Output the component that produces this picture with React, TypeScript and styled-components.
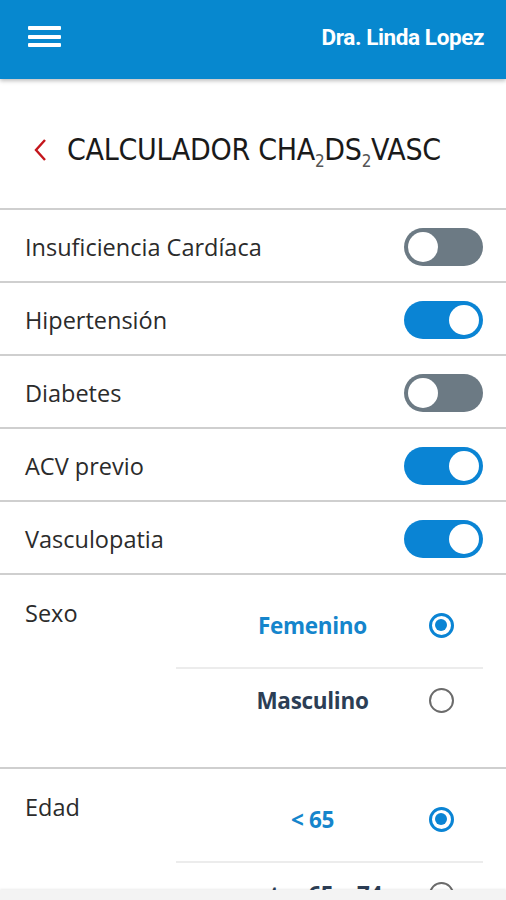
import React from "react";
import styled, { createGlobalStyle } from "styled-components";

const GlobalStyle = createGlobalStyle`
  html, body { margin: 0; padding: 0; background: #ffffff; }
  body { font-family: "Open Sans", "DejaVu Sans", sans-serif; overflow: hidden; }
  * { box-sizing: border-box; }
`;

const Page = styled.div`
  width: 506px;
  min-height: 900px;
  background: #fff;
`;

const Header = styled.header`
  height: 79px;
  background: #0788cf;
  display: flex;
  align-items: center;
  justify-content: space-between;
  padding: 0 22px 6px 28px;
  box-shadow: 0 2px 4px rgba(0, 0, 0, 0.25);
  position: relative;
  z-index: 2;
`;

const MenuButton = styled.div`
  width: 33px;
  display: flex;
  flex-direction: column;
  gap: 4.5px;
  & > span {
    display: block;
    height: 4px;
    background: #fff;
    border-radius: 1px;
  }
`;

const UserName = styled.div`
  color: #fff;
  font-family: Roboto, "Liberation Sans", sans-serif;
  font-weight: 700;
  font-size: 22.5px;
  letter-spacing: -0.4px;
`;

const TitleBar = styled.div`
  height: 131px;
  display: flex;
  align-items: center;
  padding: 12px 0 0 33px;
  border-bottom: 2px solid #cfcfcf;
`;

const BackIcon = styled.svg`
  width: 14px;
  height: 24px;
  margin-right: 20px;
`;

const Title = styled.h1`
  margin: 0;
  font-family: "DejaVu Sans Condensed", "DejaVu Sans", sans-serif;
  font-stretch: condensed;
  font-weight: 400;
  font-size: 30px;
  color: #1a1a1a;
  letter-spacing: -0.3px;
  sub {
    font-size: 17px;
    vertical-align: -7px;
    line-height: 0;
    color: #555;
  }
`;

const ToggleRow = styled.div`
  height: 73px;
  display: flex;
  align-items: center;
  justify-content: space-between;
  padding: 2px 23px 0 25px;
  border-bottom: 2px solid #cfcfcf;
`;

const Label = styled.span`
  font-family: "Open Sans", "DejaVu Sans", sans-serif;
  font-size: 23.5px;
  color: #2b2b2b;
  letter-spacing: 0;
`;

const Switch = styled.div<{ $on: boolean }>`
  width: 79px;
  height: 38px;
  border-radius: 19px;
  background: ${(p) => (p.$on ? "#0a84d4" : "#6c7a84")};
  display: flex;
  align-items: center;
  justify-content: ${(p) => (p.$on ? "flex-end" : "flex-start")};
  padding: 0 4px;
  &::after {
    content: "";
    width: 30px;
    height: 30px;
    border-radius: 50%;
    background: #fff;
  }
`;

const ChoiceSection = styled.div`
  display: grid;
  grid-template-columns: 176px 1fr;
  padding: 0 23px 36px 0;
  border-bottom: 2px solid #cfcfcf;
`;

const ChoiceLabel = styled.div`
  padding: 23px 0 0 25px;
  line-height: 30px;
`;

const Options = styled.div`
  padding-top: 18px;
  display: flex;
  flex-direction: column;
`;

const Option = styled.div`
  height: 64px;
  display: grid;
  grid-template-columns: 1fr 48px;
  align-items: center;
  padding-right: 18px;
  & + & {
    border-top: 2px solid #ececec;
    margin-top: 10px;
  }
`;

const OptionText = styled.span<{ $active: boolean }>`
  font-family: "Open Sans", "DejaVu Sans", sans-serif;
  font-weight: 700;
  font-size: 22.5px;
  letter-spacing: -0.3px;
  text-align: center;
  padding-left: 32px;
  color: ${(p) => (p.$active ? "#1585cc" : "#2c3e55")};
`;

const Radio = styled.span<{ $checked: boolean }>`
  justify-self: center;
  width: 25px;
  height: 25px;
  border-radius: 50%;
  border: ${(p) => (p.$checked ? "3px solid #0a84d4" : "2px solid #6b6b6b")};
  display: flex;
  align-items: center;
  justify-content: center;
  &::after {
    content: "";
    width: 12px;
    height: 12px;
    border-radius: 50%;
    background: ${(p) => (p.$checked ? "#0a84d4" : "transparent")};
  }
`;

const BottomBar = styled.div`
  position: fixed;
  left: 0;
  right: 0;
  bottom: 0;
  height: 10px;
  background: #f3f3f3;
  box-shadow: 0 -1px 2px rgba(0, 0, 0, 0.08);
`;

const toggles = [
  { label: "Insuficiencia Cardíaca", on: false },
  { label: "Hipertensión", on: true },
  { label: "Diabetes", on: false },
  { label: "ACV previo", on: true },
  { label: "Vasculopatia", on: true },
];

const choices = [
  {
    label: "Sexo",
    options: [
      { text: "Femenino", checked: true },
      { text: "Masculino", checked: false },
    ],
  },
  {
    label: "Edad",
    options: [
      { text: "< 65", checked: true },
      { text: "entre 65 y 74", checked: false },
      { text: "≥ 75", checked: false },
    ],
  },
];

export default function App() {
  return (
    <Page>
      <GlobalStyle />
      <Header>
        <MenuButton>
          <span />
          <span />
          <span />
        </MenuButton>
        <UserName>Dra. Linda Lopez</UserName>
      </Header>
      <TitleBar>
        <BackIcon viewBox="0 0 14 24">
          <path d="M12 2 L3 12 L12 22" fill="none" stroke="#c4161c" strokeWidth="2.4" />
        </BackIcon>
        <Title>
          CALCULADOR CHA<sub>2</sub>DS<sub>2</sub>VASC
        </Title>
      </TitleBar>
      {toggles.map((t) => (
        <ToggleRow key={t.label}>
          <Label>{t.label}</Label>
          <Switch $on={t.on} />
        </ToggleRow>
      ))}
      {choices.map((c) => (
        <ChoiceSection key={c.label}>
          <ChoiceLabel>
            <Label>{c.label}</Label>
          </ChoiceLabel>
          <Options>
            {c.options.map((o) => (
              <Option key={o.text}>
                <OptionText $active={o.checked}>{o.text}</OptionText>
                <Radio $checked={o.checked} />
              </Option>
            ))}
          </Options>
        </ChoiceSection>
      ))}
      <BottomBar />
    </Page>
  );
}
